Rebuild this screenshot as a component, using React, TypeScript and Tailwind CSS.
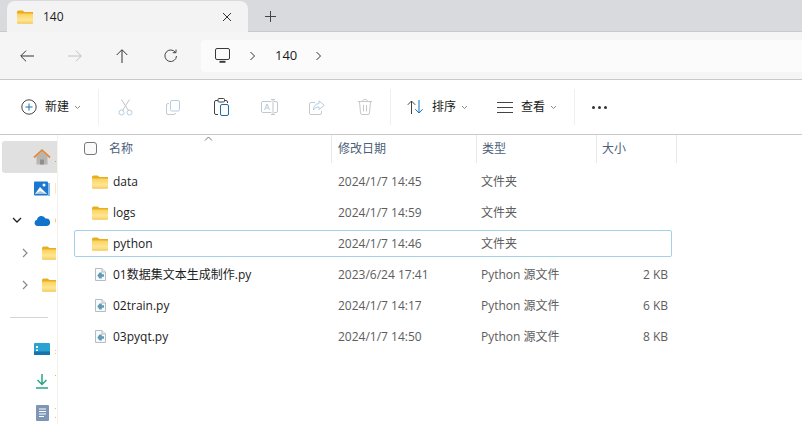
import React from "react";

const FONT = "font-['Open_Sans','Noto_Sans_CJK_SC',sans-serif]";

function Folder({ className = "" }: { className?: string }) {
  return (
    <svg className={className} width="16" height="14" viewBox="0 0 16 14">
      <defs>
        <linearGradient id="folderBody" x1="0" y1="0" x2="0" y2="1">
          <stop offset="0" stopColor="#fbd25a" />
          <stop offset="0.6" stopColor="#fde594" />
          <stop offset="1" stopColor="#fbd66c" />
        </linearGradient>
      </defs>
      <path d="M0 2a1.500 1.500 0 0 1 1.500-1.500h4L7.500 2H16v2H0z" fill="#e8ae22" />
      <path d="M0 3.500h14.500A1.500 1.500 0 0 1 16 5v7.500a1 1 0 0 1-1 1H1a1 1 0 0 1-1-1z" fill="url(#folderBody)" />
      <path d="M0 12.700h16v.1a.7.7 0 0 1-.7.7H.700a.7.7 0 0 1-.7-.7z" fill="#eec04e" />
    </svg>
  );
}

function PyFile() {
  return (
    <svg width="11" height="13" viewBox="0 0 11 13" className="shrink-0 ml-[1px]">
      <path d="M.5.500h6.500l3.500 3.500v8.500H.500z" fill="#f7f9fb" stroke="#b4bcc4" />
      <path d="M7 .500V4h3.500" fill="#e8edf1" stroke="#b4bcc4" />
      <path d="M4.500 4.500h2.300v1.800H9v2.500H6.800v1.800H4.500L2.300 7.500z" fill="#5d9bb6" />
    </svg>
  );
}

function Chevron({ className = "" }: { className?: string }) {
  return (
    <svg className={className} width="7" height="5" viewBox="0 0 7 5" fill="none" stroke="#8a8a8a">
      <path d="M1 1l2.500 2.500L6 1" />
    </svg>
  );
}

function Crumb() {
  return (
    <svg width="7" height="10" viewBox="0 0 7 10" fill="none" stroke="#333">
      <path d="M1.500 1l4 4-4 4" />
    </svg>
  );
}

function Separator({ margin }: { margin: string }) {
  return <div className={`w-px h-[36px] bg-[#f0f0f0] ${margin}`} />;
}

function ToolIcon({ children }: { children: React.ReactNode }) {
  return <div className="w-12 h-5 flex items-center justify-center">{children}</div>;
}

// the sidebar is narrowed so far that only the first pixels of each label show
function NavRow({ height, label, children }: { height: string; label?: string; children: React.ReactNode }) {
  return (
    <div className={`w-[54px] overflow-hidden flex items-center whitespace-nowrap text-[12px] text-[#333] ${height}`}>
      <div className="w-[53px] shrink-0 flex items-center">{children}</div>
      {label && <span>{label}</span>}
    </div>
  );
}

const rows = [
  { name: "data", date: "2024/1/7 14:45", type: "文件夹", size: "", folder: true },
  { name: "logs", date: "2024/1/7 14:59", type: "文件夹", size: "", folder: true },
  { name: "python", date: "2024/1/7 14:46", type: "文件夹", size: "", folder: true, selected: true },
  { name: "01数据集文本生成制作.py", date: "2023/6/24 17:41", type: "Python 源文件", size: "2 KB" },
  { name: "02train.py", date: "2024/1/7 14:17", type: "Python 源文件", size: "6 KB" },
  { name: "03pyqt.py", date: "2024/1/7 14:50", type: "Python 源文件", size: "8 KB" },
];

function Sidebar() {
  return (
    <aside className="w-[58px] shrink-0 border-r border-[#f6f1ec] pt-[6px] pl-[2px] overflow-hidden">
      <div className="rounded-l-[3px] bg-[#e0e0e0]">
        <NavRow height="h-[32px]" label="主文件夹">
          <svg className="ml-[31px]" width="18" height="16" viewBox="0 0 18 16">
            <path d="M3.500 7.500V15.500H14.500V7.500L9 2.500z" fill="#b8b4b0" />
            <path d="M7 15.500V10.500H11V15.500z" fill="#8f8f92" />
            <path d="M1 8.500L9 1.200l8 7.300" fill="none" stroke="#de8a3a" strokeWidth="1.700" />
          </svg>
        </NavRow>
      </div>
      <NavRow height="h-[31px]" label="图库">
        <svg className="ml-[32px]" width="16" height="16" viewBox="0 0 16 16">
          <rect x="0" y="0.500" width="14" height="14" rx="1" fill="#1a78d0" />
          <path d="M1 13l5-7 7 7z" fill="#fff" />
          <path d="M1 13l5-3 7 3z" fill="#a9c3dc" />
          <circle cx="10" cy="4" r="1.500" fill="#fff" />
          <rect x="14" y="2" width="2" height="13" fill="#88bdeb" />
        </svg>
      </NavRow>
      <NavRow height="h-[33px]" label="OneDrive">
        <svg className="ml-[10px]" width="10" height="7" viewBox="0 0 10 7" fill="none" stroke="#222" strokeWidth="1.300">
          <path d="M1 1l4 4 4-4" />
        </svg>
        <svg className="ml-[12px]" width="16" height="11" viewBox="0 0 16 11">
          <path d="M3.500 11A3.200 3.200 0 0 1 3 4.700 4.500 4.500 0 0 1 11.500 3.500 3.800 3.800 0 0 1 13 11z" fill="#1173c9" />
        </svg>
      </NavRow>
      {[0, 1].map((i) => (
        <NavRow key={i} height="h-[32px]">
          <svg className="ml-[20px] shrink-0" width="6" height="10" viewBox="0 0 6 10" fill="none" stroke="#8a8a8a" strokeWidth="1.200">
            <path d="M1 1l4 4-4 4" />
          </svg>
          <Folder className="ml-[14px] shrink-0" />
        </NavRow>
      ))}
      <div className="h-px w-[38px] bg-[#d5d5d5] ml-[8px] mt-[16px] mb-[15px]" />
      <NavRow height="h-[32px]" label="桌面">
        <svg className="ml-[32px]" width="16" height="12" viewBox="0 0 16 12">
          <rect width="16" height="12" rx="1" fill="#2aa3d3" />
          <rect y="8.500" width="16" height="3.500" fill="#1673ac" />
          <rect x="2" y="3" width="2" height="2" fill="#fff" />
          <rect x="2" y="6.500" width="2" height="1.500" fill="#fff" />
        </svg>
      </NavRow>
      <NavRow height="h-[32px]" label="下载">
        <svg className="ml-[34px]" width="12" height="15" viewBox="0 0 12 15" fill="none" stroke="#2aa686" strokeWidth="1.500">
          <path d="M6 0v10M1.500 6L6 10.500 10.500 6M0 14h12" />
        </svg>
      </NavRow>
      <NavRow height="h-[31px]" label="文档">
        <svg className="ml-[34px]" width="13" height="16" viewBox="0 0 13 16">
          <rect width="13" height="16" rx="1" fill="#7f95b5" />
          <path d="M3 4h7M3 6.500h7M3 9h7M3 11.500h5" stroke="#fff" />
        </svg>
      </NavRow>
    </aside>
  );
}

function FileList() {
  return (
    <main className="flex-1 relative pl-[16px]">
      <svg className="absolute left-[146px] top-[1px]" width="9" height="5" viewBox="0 0 9 5" fill="none" stroke="#777">
        <path d="M1 4.500l3.500-3.500L8 4.500" />
      </svg>
      <div className="h-[28px] flex text-[12px] text-[#4c607a]">
        <div className="w-[257px] flex items-center">
          <div className="ml-[10px] mb-[2px] w-[13px] h-[13px] rounded-[3px] border border-[#777] bg-[#fafafa]" />
          <span className="ml-[12px]">名称</span>
        </div>
        <div className="w-[145px] border-l border-[#e8e8e8] pl-[6px] flex items-center">修改日期</div>
        <div className="w-[120px] border-l border-[#e8e8e8] pl-[5px] flex items-center">类型</div>
        <div className="w-[81px] border-x border-[#e8e8e8] pl-[5px] flex items-center">大小</div>
      </div>
      <div className="pt-[5px] flex flex-col gap-[4px] w-[598px]">
        {rows.map((r) => (
          <div
            key={r.name}
            className={`h-[27px] flex items-center text-[12px] border rounded-[2px] ${r.selected ? "border-[#a5d0ea]" : "border-transparent"}`}
          >
            <div className="w-[256px] flex items-center">
              <div className="w-[38px] flex justify-center pl-[17px] pr-[5px]">
                {r.folder ? <Folder className="shrink-0" /> : <PyFile />}
              </div>
              <span className="text-[#1c1c1c] whitespace-nowrap">{r.name}</span>
            </div>
            <div className="w-[144px] text-[#5d5d5d] pl-[7px]">{r.date}</div>
            <div className="w-[120px] text-[#5d5d5d] pl-[6px]">{r.type}</div>
            <div className="flex-1 text-[#5d5d5d] text-right pr-[3px]">{r.size}</div>
          </div>
        ))}
      </div>
    </main>
  );
}

export default function App() {
  return (
    <div className={`w-[802px] h-[424px] overflow-hidden flex flex-col bg-white ${FONT}`}>
      {/* tab strip */}
      <div className="h-[32px] shrink-0 bg-[#d9dadd] border-b border-[#c8c9cb] flex items-end pl-[7px]">
        <div className="w-[241px] h-[31px] -mb-px bg-[#f3f3f3] rounded-t-[8px] flex items-center pl-[10px] pr-[16px]">
          <Folder />
          <span className="ml-[10px] text-[12px] text-[#1a1a1a]">140</span>
          <svg className="ml-auto" width="10" height="10" viewBox="0 0 10 10" stroke="#333">
            <path d="M1 1l8 8M9 1l-8 8" />
          </svg>
        </div>
        <svg className="ml-[17px] mb-[9px]" width="11" height="11" viewBox="0 0 11 11" stroke="#444">
          <path d="M5.500 0v11M0 5.500h11" />
        </svg>
      </div>

      {/* nav bar */}
      <div className="h-[48px] shrink-0 bg-[#f5f5f5] border-b border-[#c9c9c9] flex items-center pl-[20px]">
        <svg width="14" height="12" viewBox="0 0 14 12" fill="none" stroke="#333">
          <path d="M14 6H1M6 .700L.700 6 6 11.300" />
        </svg>
        <svg className="ml-[34px]" width="14" height="12" viewBox="0 0 14 12" fill="none" stroke="#c2c2c2">
          <path d="M0 6h13M8 .700L13.300 6 8 11.300" />
        </svg>
        <svg className="ml-[34px]" width="12" height="14" viewBox="0 0 12 14" fill="none" stroke="#333">
          <path d="M6 14V1M.700 6L6 .700 11.300 6" />
        </svg>
        <svg className="ml-[36px]" width="13" height="13" viewBox="0 0 13 13" fill="none" stroke="#444">
          <path d="M11.500 3.500A5.800 5.800 0 1 0 12.500 7M12 .500v3.200H8.800" />
        </svg>
        <div className="ml-[24px] flex-1 h-[32px] bg-[#fbfbfb] rounded-l-[4px] flex items-center pl-[14px]">
          <svg width="15" height="15" viewBox="0 0 15 15" fill="none" stroke="#3a3a3a">
            <rect x=".500" y=".500" width="14" height="11" rx="1.500" />
            <path d="M4.500 13.800h6" strokeWidth="2" />
          </svg>
          <span className="ml-[19px]"><Crumb /></span>
          <span className="ml-[19px] text-[13px] text-[#1a1a1a]">140</span>
          <span className="ml-[18px]"><Crumb /></span>
        </div>
      </div>

      {/* command bar */}
      <div className="h-[55px] shrink-0 border-b border-[#c9c9c9] flex items-center pl-[21px] text-[12px] text-[#1a1a1a]">
        <svg width="16" height="16" viewBox="0 0 16 16" fill="none">
          <circle cx="8" cy="8" r="7.200" stroke="#444" />
          <path d="M8 4.500v7M4.500 8h7" stroke="#1675c0" />
        </svg>
        <span className="ml-[8px]">新建</span>
        <Chevron className="ml-[5px]" />
        <Separator margin="ml-[17px] mr-[2px]" />
        <ToolIcon>
          <svg width="15" height="17" viewBox="0 0 15 17" fill="none" stroke="#b5cde0">
            <circle cx="3.500" cy="13.500" r="2.500" />
            <circle cx="11.500" cy="13.500" r="2.500" />
            <path d="M4.500 11.500L11.500.500M10.500 11.500L3.500.500" stroke="#c4c4c4" />
          </svg>
        </ToolIcon>
        <ToolIcon>
          <svg width="14" height="15" viewBox="0 0 14 15" fill="none" stroke="#c8c8c8">
            <rect x="4.500" y=".500" width="9" height="10.500" rx="1.500" stroke="#b5cde0" />
            <path d="M3 3.500H2A1.500 1.500 0 0 0 .500 5v8A1.500 1.500 0 0 0 2 14.500h6A1.500 1.500 0 0 0 9.500 13" />
          </svg>
        </ToolIcon>
        <ToolIcon>
          <svg width="15" height="18" viewBox="0 0 15 18" fill="none" stroke="#444">
            <path d="M4 2.500H2A1.500 1.500 0 0 0 .500 4v11A1.500 1.500 0 0 0 2 16.500h2M11 2.500h1A1.500 1.500 0 0 1 13.500 4v1" />
            <rect x="4" y=".500" width="6.500" height="3.500" rx="1" />
            <rect x="6.500" y="6.500" width="8" height="11" rx="1.500" stroke="#1a6fa8" />
          </svg>
        </ToolIcon>
        <ToolIcon>
          <svg width="17" height="16" viewBox="0 0 17 16" fill="none" stroke="#b5cde0">
            <path d="M10.500 2.500H2A1.500 1.500 0 0 0 .500 4v8A1.500 1.500 0 0 0 2 13.500h8.500M13 2.500h2A1.500 1.500 0 0 1 16.500 4v8A1.500 1.500 0 0 1 15 13.500h-2M10 .500h4M10 15.500h4M12 .500v15" stroke="#c0c8d0" />
            <path d="M3.500 11L6 5l2.500 6M4.500 9h3" />
          </svg>
        </ToolIcon>
        <ToolIcon>
          <svg width="16" height="15" viewBox="0 0 16 15" fill="none" stroke="#b5cde0">
            <path d="M6 2.500H2A1.500 1.500 0 0 0 .500 4v9A1.500 1.500 0 0 0 2 14.500h9a1.500 1.500 0 0 0 1.500-1.500v-2" stroke="#c8c8c8" />
            <path d="M10 .800l5.200 4.500L10 9.500V7c-3 0-4.500 1-5.500 3 0-4 2-6 5.500-6.500z" />
          </svg>
        </ToolIcon>
        <ToolIcon>
          <svg width="14" height="16" viewBox="0 0 14 16" fill="none" stroke="#c8c8c8">
            <path d="M0 2.500h14M4.500 2.500C4.500 1 5.500.500 7 .500s2.500.500 2.500 2M1.500 2.500l1 11.500a1.500 1.500 0 0 0 1.500 1.500h6a1.500 1.500 0 0 0 1.500-1.500l1-11.500M5.500 6v6.500M8.500 6v6.500" />
          </svg>
        </ToolIcon>
        <Separator margin="ml-[1px]" />
        <svg className="ml-[16px]" width="17" height="14" viewBox="0 0 17 14" fill="none">
          <path d="M4.500 14V1M.800 4.800L4.500 1l3.700 3.800" stroke="#444" />
          <path d="M12 0v13M8.300 9.200L12 13l3.700-3.800" stroke="#1675c0" />
        </svg>
        <span className="ml-[8px]">排序</span>
        <Chevron className="ml-[5px]" />
        <svg className="ml-[29px]" width="16" height="11" viewBox="0 0 16 11" fill="none" stroke="#444">
          <path d="M0 .500h16M0 5.500h16M0 10.500h16" />
        </svg>
        <span className="ml-[8px]">查看</span>
        <Chevron className="ml-[5px]" />
        <Separator margin="ml-[17px]" />
        <div className="ml-[17px] flex gap-[3px]">
          <span className="w-[3px] h-[3px] rounded-full bg-[#333]" />
          <span className="w-[3px] h-[3px] rounded-full bg-[#333]" />
          <span className="w-[3px] h-[3px] rounded-full bg-[#333]" />
        </div>
      </div>

      <div className="flex-1 flex min-h-0">
        <Sidebar />
        <FileList />
      </div>
    </div>
  );
}
